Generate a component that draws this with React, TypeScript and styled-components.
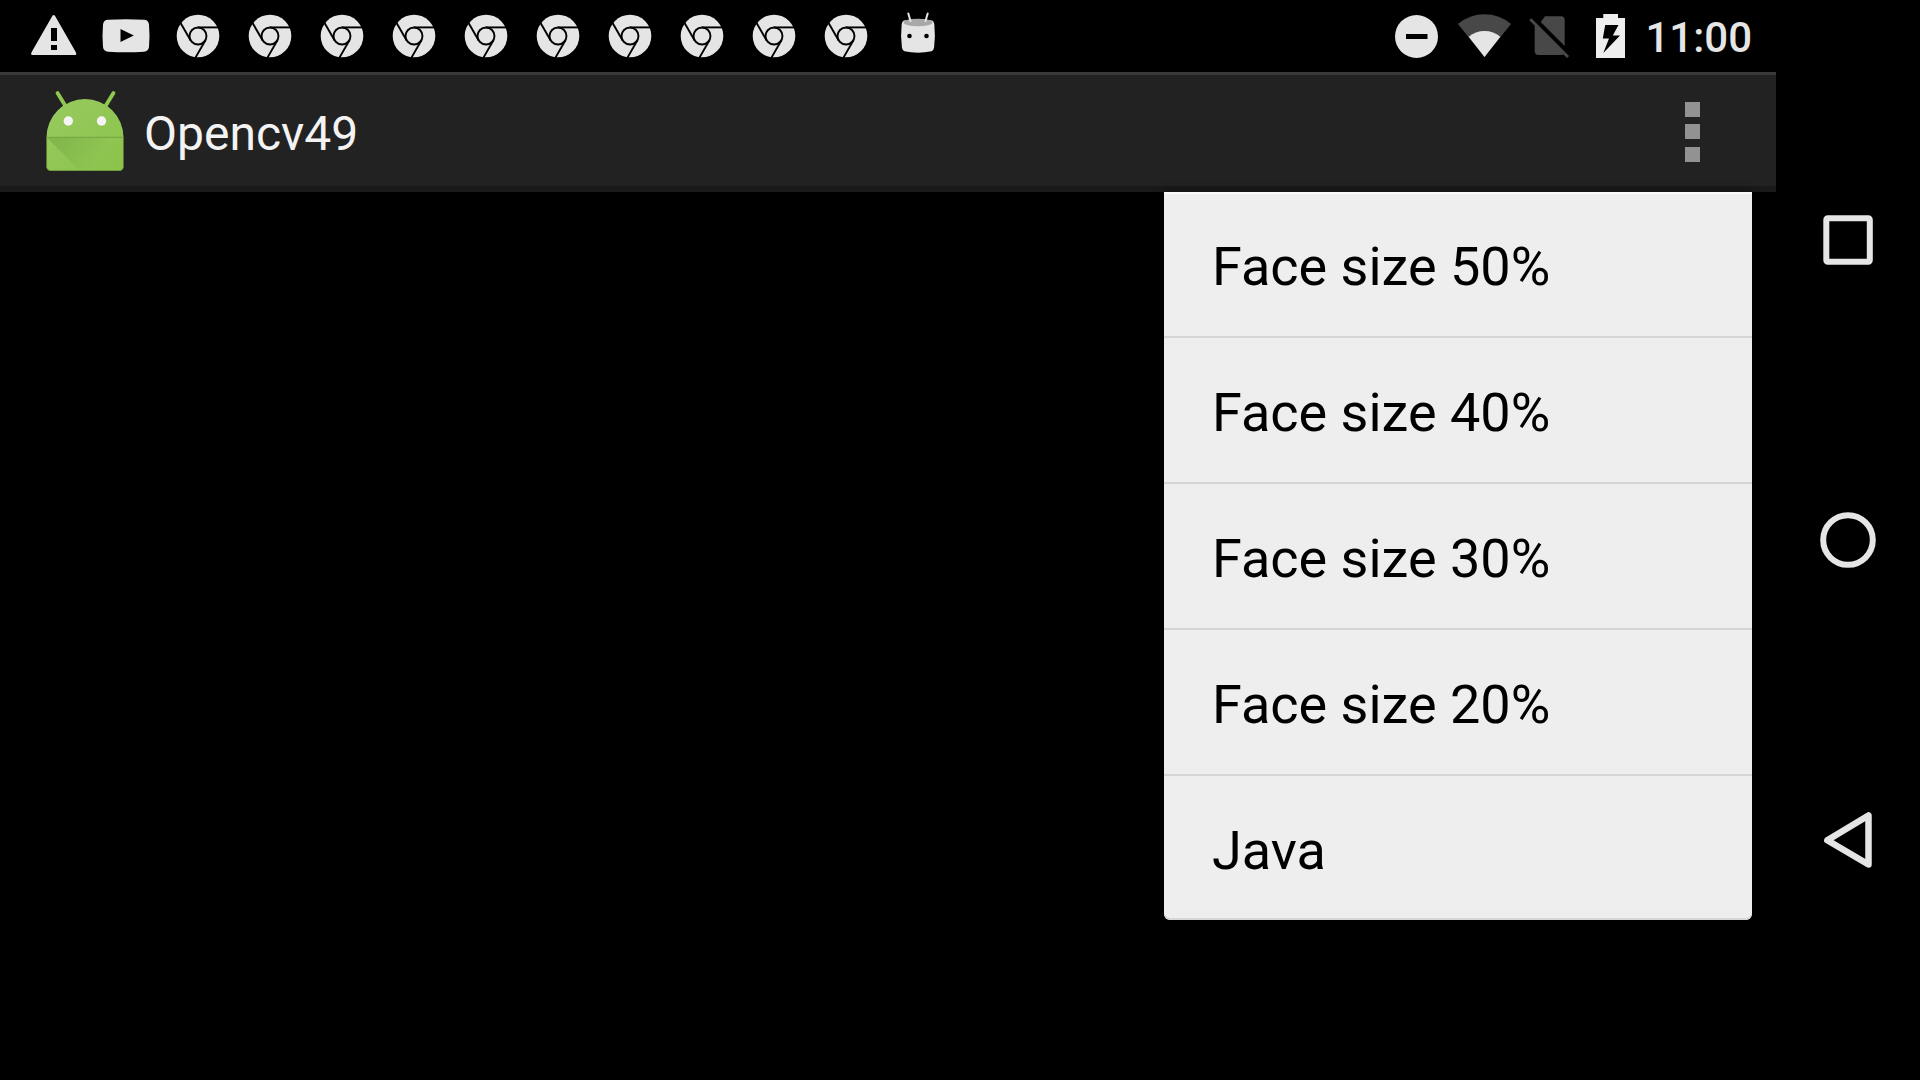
import React from "react";
import styled, { createGlobalStyle } from "styled-components";

const GlobalStyle = createGlobalStyle`
  *, *::before, *::after { box-sizing: border-box; }
  body { margin: 0; background: #000; font-family: Roboto, "Noto Sans", sans-serif; }
`;

const Screen = styled.div`
  display: flex;
  min-height: 100vh;
  background: #000;
`;

const Main = styled.main`
  flex: 1;
  min-width: 0;
`;

const StatusBar = styled.div`
  display: flex;
  align-items: center;
  justify-content: space-between;
  height: 72px;
  padding: 0 24px 0 18px;
`;

const IconGroup = styled.div`
  display: flex;
  align-items: center;
  color: #e5e5e5;
`;

const StatusIcon = styled.svg`
  display: block;
  flex: none;
  height: 72px;
`;

const Clock = styled.time`
  padding-top: 4px;
  font-size: 42px;
  line-height: 48px;
  font-weight: 500;
`;

const ActionBar = styled.header`
  position: relative;
  display: flex;
  align-items: center;
  height: 120px;
  padding-left: 36px;
  background: linear-gradient(#3a3a3a 0 3px, #222 3px 114px, #1a1a1a 114px);
`;

const Title = styled.h1`
  flex: 1;
  margin: 0;
  padding: 4px 0 0 12px;
  color: #f3f3f3;
  font-size: 48px;
  line-height: 56px;
  font-weight: 400;
`;

const OverflowButton = styled.button`
  display: grid;
  place-items: center;
  width: 168px;
  height: 100%;
  padding: 0;
  border: 0;
  background: none;
  color: #929292;
`;

const Menu = styled.ul`
  position: absolute;
  top: 100%;
  right: 24px;
  width: 588px;
  margin: 0;
  padding: 0;
  overflow: hidden;
  list-style: none;
  background: #eee;
  border-radius: 0 0 6px 6px;
  box-shadow: 0 0 12px rgba(0, 0, 0, 0.4);

  &::after {
    content: "";
    position: absolute;
    inset: 0;
    border-radius: inherit;
    box-shadow: inset 0 2px #fafafa, inset 0 -2px #d6d6d6;
    pointer-events: none;
  }
`;

const MenuRow = styled.li`
  & + & { border-top: 2px solid #d6d6d6; }
`;

const MenuButton = styled.button`
  display: block;
  width: 100%;
  height: 144px;
  padding: 6px 48px 0;
  border: 0;
  background: none;
  color: #000;
  font: 400 54px/64px Roboto, "Noto Sans", sans-serif;
  text-align: left;
`;

const NavBar = styled.nav`
  display: flex;
  flex-direction: column;
  width: 144px;
  padding: 90px 0;
`;

const NavButton = styled.button`
  flex: 1;
  display: grid;
  place-items: center;
  padding: 0;
  border: 0;
  background: none;
  color: #e5e5e5;
`;

const WarningIcon = () => (
  <StatusIcon width="72" viewBox="0 0 72 72" aria-hidden="true">
    <path fill="currentColor" fillRule="evenodd" d="M34.300 16Q35.700 13.800 37.100 16L58 52.400Q59 55 56.500 55H15Q12.400 55 13.400 52.400ZM33 28V41H39V28ZM33 45V50H39V45Z" />
  </StatusIcon>
);

const VideoIcon = () => (
  <StatusIcon width="72" viewBox="0 0 72 72" aria-hidden="true">
    <path fill="currentColor" fillRule="evenodd" d="M18 19.800Q36 18.600 54 19.800Q58.400 20 59 24.500Q60 35.700 59 47Q58.400 51.400 54 51.700Q36 52.900 18 51.700Q13.600 51.400 13 47Q12 35.700 13 24.500Q13.600 20 18 19.800ZM30.500 29V42L43.800 35.500Z" />
  </StatusIcon>
);

const ChromeIcon = () => (
  <StatusIcon width="72" viewBox="0 0 72 72" aria-hidden="true">
    <circle cx="36" cy="36" r="21.300" fill="currentColor" />
    <g fill="none" stroke="#000" strokeWidth="1.900">
      <circle cx="36" cy="36" r="8.500" />
      <path d="M36 27.400H58" />
      <path d="M36 27.400H58" transform="rotate(120 36 36)" />
      <path d="M36 27.400H58" transform="rotate(240 36 36)" />
    </g>
  </StatusIcon>
);

const DroidIcon = () => (
  <StatusIcon width="72" viewBox="0 0 72 72" aria-hidden="true">
    <path fill="currentColor" d="M22 20.500Q36 17.500 50 20.500Q52 21 52.300 24Q53.600 36 52.100 47.500Q51.700 50.300 49.500 51.300Q36 54.200 22.500 51.300Q20.300 50.300 19.900 47.500Q18.400 36 19.700 24Q20 21 22 20.500Z" />
    <ellipse cx="36" cy="22.500" rx="14.500" ry="3.800" fill="#a8a8a8" />
    <path d="M26.300 13.500L28.500 21M45.700 13.500L43.500 21" stroke="currentColor" strokeWidth="2" strokeLinecap="round" />
    <circle cx="27.500" cy="36" r="2.300" fill="#000" />
    <circle cx="44.500" cy="36" r="2.300" fill="#000" />
  </StatusIcon>
);

const DoNotDisturbIcon = () => (
  <StatusIcon width="64" viewBox="0 0 64 72" aria-hidden="true">
    <circle cx="27.500" cy="36.500" r="21.500" fill="currentColor" />
    <path d="M17 36.500H38.500" stroke="#000" strokeWidth="5" />
  </StatusIcon>
);

const WifiIcon = () => (
  <StatusIcon width="64" viewBox="0 0 64 72" aria-hidden="true">
    <path fill="#484848" d="M31.500 57L5 24Q16.500 14.300 31.500 14.300T58 24Z" />
    <path fill="currentColor" d="M31.500 57L15.700 36.700Q22.500 31 31.500 31T47.300 36.700Z" />
  </StatusIcon>
);

const NoSimIcon = () => (
  <StatusIcon width="64" viewBox="0 0 64 72" aria-hidden="true">
    <path fill="#484848" d="M28 16.300H44Q47.700 16.300 47.700 20V46L23.700 22Z" />
    <path fill="#484848" d="M17.700 23.500L47 53.500Q46 55 43.500 55H21.500Q17.700 55 17.700 51Z" />
    <path d="M13.300 19.300L51 57" stroke="#484848" strokeWidth="3" />
  </StatusIcon>
);

const BatteryIcon = () => (
  <StatusIcon width="64" viewBox="0 0 64 72" aria-hidden="true">
    <path fill="#eee" fillRule="evenodd" d="M22.300 14H37V18H44V58H15V18H22.300ZM24.200 25L21.800 38.500H28L22.300 53L39 35.500H31.800L37.500 25Z" />
  </StatusIcon>
);

const AppIcon = () => (
  <svg width="96" height="96" viewBox="0 0 96 96" aria-hidden="true">
    <defs>
      <linearGradient id="dome" x1="0" y1="0" x2="1" y2="1">
        <stop offset="0" stopColor="#98ca60" />
        <stop offset="1" stopColor="#8bc34a" />
      </linearGradient>
      <linearGradient id="fold" gradientUnits="userSpaceOnUse" x1="20" y1="54" x2="58" y2="80">
        <stop offset="0" stopColor="#558b2f" stopOpacity="0.300" />
        <stop offset="1" stopColor="#558b2f" stopOpacity="0" />
      </linearGradient>
    </defs>
    <path d="M21.500 9L29.500 22M77.500 9L69.500 22" stroke="#8fc850" strokeWidth="3.800" strokeLinecap="round" />
    <path fill="url(#dome)" d="M10.500 53.500A38.500 38.500 0 0 1 87.500 53.500V82Q87.500 86.700 83 86.700H15Q10.500 86.700 10.500 82Z" />
    <path fill="url(#fold)" d="M11 53.500H72L60 86H43Z" />
    <path d="M10.500 53.300H87.500" stroke="#74a340" strokeWidth="1" />
    <path d="M10.700 82Q10.700 86.500 15 86.500H83Q87.300 86.500 87.300 82" fill="none" stroke="#6f9e3c" strokeWidth="0.800" />
    <circle cx="32.300" cy="37" r="4.700" fill="#f5f5f5" />
    <circle cx="65.500" cy="37" r="4.700" fill="#f5f5f5" />
  </svg>
);

const chromeNotifications = Array.from({ length: 10 }, (_, i) => i);
const menuItems = ["Face size 50%", "Face size 40%", "Face size 30%", "Face size 20%", "Java"];

export default function App() {
  return (
    <>
      <GlobalStyle />
      <Screen>
        <Main>
          <StatusBar>
            <IconGroup>
              <WarningIcon />
              <VideoIcon />
              {chromeNotifications.map((n) => (
                <ChromeIcon key={n} />
              ))}
              <DroidIcon />
            </IconGroup>
            <IconGroup>
              <DoNotDisturbIcon />
              <WifiIcon />
              <NoSimIcon />
              <BatteryIcon />
              <Clock>11:00</Clock>
            </IconGroup>
          </StatusBar>
          <ActionBar>
            <AppIcon />
            <Title>Opencv49</Title>
            <OverflowButton type="button" aria-label="More options">
              <svg width="16" height="60" viewBox="0 0 16 60" fill="currentColor" aria-hidden="true">
                <path d="M1 0H16V15H1ZM1 22H16V37H1ZM1 45H16V60H1Z" />
              </svg>
            </OverflowButton>
            <Menu>
              {menuItems.map((item) => (
                <MenuRow key={item}>
                  <MenuButton type="button">{item}</MenuButton>
                </MenuRow>
              ))}
            </Menu>
          </ActionBar>
        </Main>
        <NavBar aria-label="System navigation">
          <NavButton type="button" aria-label="Recent apps">
            <svg width="60" height="60" viewBox="0 0 60 60" fill="none" stroke="currentColor" strokeWidth="6" aria-hidden="true">
              <rect x="8.300" y="8.300" width="43.500" height="43.500" rx="1.500" />
            </svg>
          </NavButton>
          <NavButton type="button" aria-label="Home">
            <svg width="60" height="60" viewBox="0 0 60 60" fill="none" stroke="currentColor" strokeWidth="6" aria-hidden="true">
              <circle cx="30" cy="30" r="24.800" />
            </svg>
          </NavButton>
          <NavButton type="button" aria-label="Back">
            <svg width="60" height="60" viewBox="0 0 60 60" fill="none" stroke="currentColor" strokeWidth="6.500" strokeLinejoin="round" aria-hidden="true">
              <path d="M50.500 5.500V54.500L9.300 30.300Z" />
            </svg>
          </NavButton>
        </NavBar>
      </Screen>
    </>
  );
}
